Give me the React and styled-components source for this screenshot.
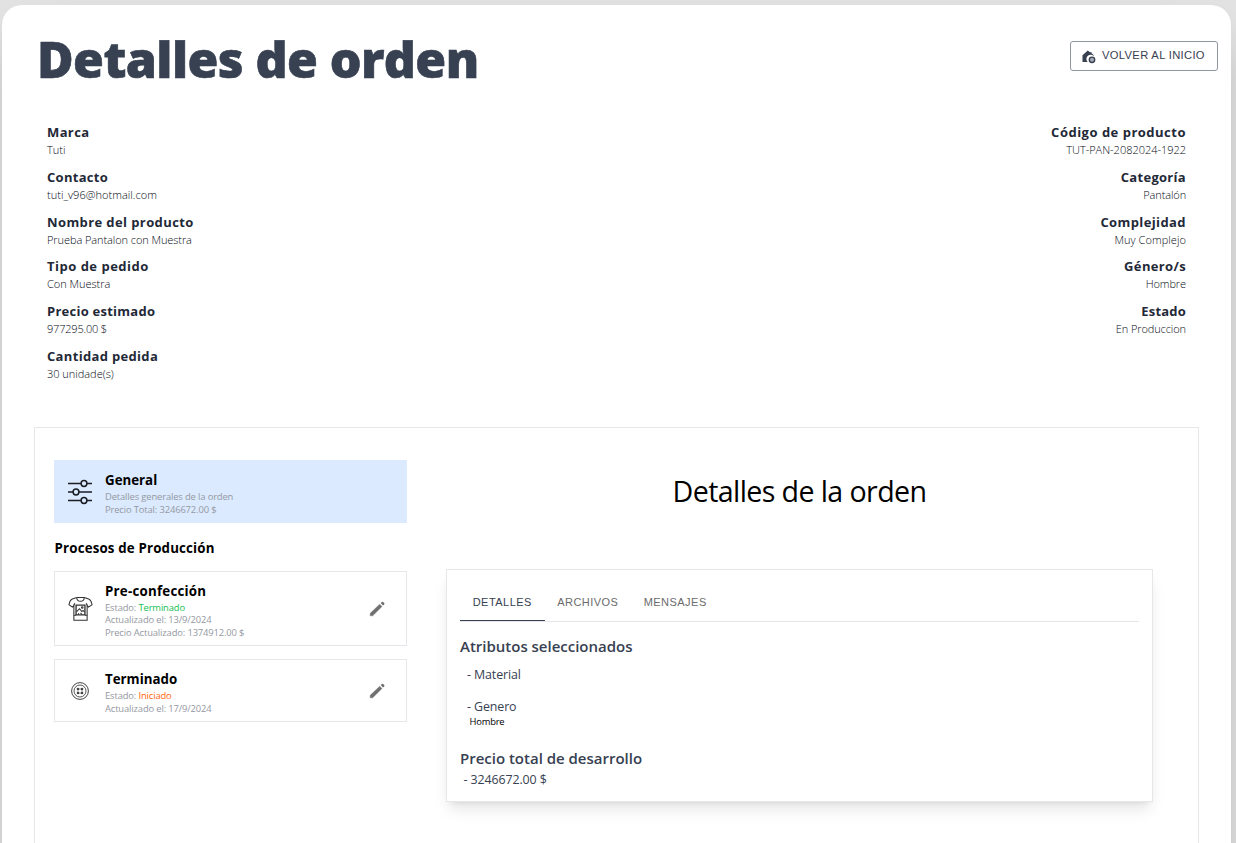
import React from "react";
import styled, { createGlobalStyle } from "styled-components";

const Global = createGlobalStyle`
  *, *::before, *::after { box-sizing: border-box; }
  html, body { margin: 0; height: 843px; overflow: hidden; background: #e3e3e3; }
  body { font-family: "Open Sans", "Noto Sans", sans-serif; color: #000; }
  h1, h2, h3, p { margin: 0; }
`;

const Page = styled.div`
  height: 843px;
  padding: 5px 5px 0 2px;
  overflow: hidden;
`;
const Sheet = styled.main`
  height: 1100px;
  background: #fff;
  border-radius: 20px;
  box-shadow: 0 25px 50px -12px rgba(0, 0, 0, 0.25);
`;
const Header = styled.header`
  display: flex;
  justify-content: space-between;
  align-items: flex-start;
  height: 117px;
  padding: 18px 13px 0 35px;
`;
const Title = styled.h1`
  font-size: 50px;
  line-height: 72px;
  font-weight: 800;
  letter-spacing: -0.6px;
  color: #374151;
  -webkit-text-stroke: 0.6px #374151;
  white-space: nowrap;
`;
const HomeButton = styled.button`
  display: flex;
  align-items: center;
  gap: 5px;
  width: 148px;
  height: 30px;
  margin-top: 18px;
  padding: 0 0 0 11px;
  border: 1px solid #9095a0;
  border-radius: 3px;
  background: #fff;
  color: #374151;
  font: 400 11.2px/28px "Liberation Sans", Arial, sans-serif;
  letter-spacing: 0.33px;
  white-space: nowrap;
  svg { margin-top: 1px; }
  span { margin-top: -2px; }
`;
const Summary = styled.section`
  display: flex;
  justify-content: space-between;
  height: 305px;
  padding: 0 45px;
`;
const FieldList = styled.div`
  display: flex;
  flex-direction: column;
  gap: 6.8px;
  text-align: ${(p) => (p.$end ? "right" : "left")};
`;
const Field = styled.div`
  height: 38px;
  white-space: nowrap;
`;
const FieldLabel = styled.h3`
  font-size: 13px;
  line-height: 20px;
  font-weight: 700;
  letter-spacing: ${(p) => p.$ls ?? 0.38}px;
  color: #1f2937;
`;
const FieldValue = styled.p`
  font-size: 11px;
  line-height: 16.4px;
  font-weight: 300;
  letter-spacing: ${(p) => p.$ls ?? -0.02}px;
  color: #050a14;
`;
const Workspace = styled.section`
  display: flex;
  gap: 39px;
  height: 700px;
  margin: 0 32px;
  padding: 32px 45px 0 19px;
  border: 1px solid #e5e7eb;
`;
const Sidebar = styled.aside`
  display: flex;
  flex-direction: column;
  width: 353px;
  flex: none;
`;
const Step = styled.div`
  display: flex;
  align-items: center;
  height: ${(p) => p.$h}px;
  margin-bottom: 13px;
  padding: 0 17px 0 ${(p) => (p.$active ? 13 : 12)}px;
  background: ${(p) => (p.$active ? "#dbeafe" : "#fff")};
  border: ${(p) => (p.$active ? "0" : "1px solid #e5e7eb")};
`;
const StepIcon = styled.div`
  display: flex;
  justify-content: center;
  width: 26px;
  margin-right: 12px;
`;
const StepText = styled.div`
  flex: 1;
  padding-top: ${(p) => p.$top ?? 4}px;
  white-space: nowrap;
`;
const StepName = styled.h3`
  font-size: 13.3px;
  line-height: 21px;
  font-weight: 700;
  letter-spacing: ${(p) => p.$ls ?? 0}px;
`;
const StepMeta = styled.p`
  font-size: 9.4px;
  line-height: 12.6px;
  letter-spacing: ${(p) => p.$ls ?? -0.13}px;
  color: #9599a3;
`;
const Status = styled.span`
  color: ${(p) => (p.$done ? "#14bf55" : "#ff6508")};
`;
const GroupTitle = styled.h3`
  height: 35px;
  margin-left: 0.5px;
  font-size: 13.3px;
  line-height: 24px;
  font-weight: 700;
  letter-spacing: 0.17px;
`;
const Content = styled.div`
  flex: 1;
`;
const ContentTitle = styled.h2`
  height: 109px;
  font-size: 28.6px;
  line-height: 61px;
  font-weight: 400;
  letter-spacing: -0.6px;
  text-align: center;
`;
const Panel = styled.div`
  height: 233px;
  padding: 15px 13px;
  border: 1px solid #e5e7eb;
  box-shadow: 0 10px 15px -3px rgba(0, 0, 0, 0.1), 0 4px 6px -4px rgba(0, 0, 0, 0.1);
`;
const Tabs = styled.nav`
  display: flex;
  height: 37px;
  margin-bottom: 12px;
  border-bottom: 1px solid #e5e7eb;
`;
const Tab = styled.div`
  height: 36px;
  padding: 0 12.7px;
  border-bottom: 1px solid ${(p) => (p.$active ? "#374151" : "transparent")};
  color: ${(p) => (p.$active ? "#374151" : "#6b6b6b")};
  font: 400 11px/34px "Liberation Sans", Arial, sans-serif;
  letter-spacing: 0.46px;
  white-space: nowrap;
`;
const SectionTitle = styled.h3`
  height: ${(p) => p.$h}px;
  font-size: 15px;
  line-height: 24px;
  font-weight: 600;
  letter-spacing: ${(p) => p.$ls ?? -0.01}px;
  color: #374151;
`;
const Attribute = styled.p`
  height: ${(p) => p.$h}px;
  padding-left: ${(p) => p.$indent ?? 7}px;
  font-size: 12.4px;
  line-height: 20px;
  letter-spacing: -0.1px;
  color: #374151;
`;
const AttributeValue = styled.p`
  height: 30px;
  padding-left: 9.5px;
  font-size: 9.4px;
  line-height: 12px;
  letter-spacing: -0.2px;
`;

const HomeIcon = () => (
  <svg width="15" height="14" viewBox="0 0 15 14">
    <path d="M.5 12V5.2L5.8.6l2.2 1.6h1.6v1l2 1.7v1.2A4.2 4.2 0 0 0 5.6 12z" fill="#374151" />
    <circle cx="10" cy="9.8" r="2.7" fill="#a5abb4" stroke="#374151" strokeWidth="1.4" />
  </svg>
);
const SlidersIcon = () => (
  <svg width="26" height="26" viewBox="0 0 26 26" fill="none" stroke="#1a1d22" strokeWidth="1.5">
    <path d="M1 4.5h13M20 4.5h5M1 13h5M12 13h13M1 21.5h13M20 21.5h5" />
    <circle cx="17" cy="4.5" r="2.9" />
    <circle cx="9" cy="13" r="2.9" />
    <circle cx="17" cy="21.5" r="2.9" />
  </svg>
);
const ShirtIcon = () => (
  <svg width="25" height="25" viewBox="0 0 26 26" fill="none" stroke="#333" strokeWidth="1.1">
    <path d="M9 1.5 4.5 3.2Q2 4.2 1 9.2l3.7 2.3 1.4-1.7v15.4h13.8V9.8l1.4 1.7L25 9.2q-1-5-3.5-6L17 1.5" />
    <path d="M9 1.5h8q-.4 4-4 4t-4-4M6 9.5l1.2-2M20 9.5l-1.2-2M6 20h2.5M17.5 20H20" />
    <path d="M8.4 9.5h9.2v10.2H8.4z" strokeWidth="1.4" />
    <path d="M9 16.2l3-3 2.4 3 1.2-1.2 1.8 1.8M13 17.5l2 2M11 18v1.5" />
    <circle cx="14.8" cy="12" r=".8" />
  </svg>
);
const ButtonIcon = () => (
  <svg width="18" height="18" viewBox="0 0 18 18" fill="none" stroke="#444" strokeWidth="1">
    <circle cx="9" cy="9" r="8.4" />
    <circle cx="9" cy="9" r="6" strokeWidth=".9" />
    <g fill="#444" stroke="none">
      <circle cx="7" cy="7" r="1.3" />
      <circle cx="11" cy="7" r="1.3" />
      <circle cx="7" cy="11" r="1.3" />
      <circle cx="11" cy="11" r="1.3" />
    </g>
    <path d="M7 7h4v4H7z" strokeWidth=".5" />
  </svg>
);
const PencilIcon = () => (
  <svg width="24" height="24" viewBox="0 0 24 24" fill="#6f6f6f">
    <path d="M5.2 16.3 14.7 7.2l2.3 2.4L7.7 18.8H5.2z" stroke="#6f6f6f" strokeWidth=".4" />
    <path d="m15.7 6.1 1.2-1.2q.6-.4 1.2.1l1.1 1.1q.5.6 0 1.2l-1.2 1.2z" />
  </svg>
);

const leftFields = [
  ["Marca", "Tuti"],
  ["Contacto", "tuti_v96@hotmail.com", 0.3, 0.03],
  ["Nombre del producto", "Prueba Pantalon con Muestra", 0.4, -0.08],
  ["Tipo de pedido", "Con Muestra", 0.5],
  ["Precio estimado", "977295.00 $", 0.25, -0.2],
  ["Cantidad pedida", "30 unidade(s)", 0.33],
];
const rightFields = [
  ["Código de producto", "TUT-PAN-2082024-1922", 0.5],
  ["Categoría", "Pantalón", 0.3, -0.12],
  ["Complejidad", "Muy Complejo", 0.4, 0.06],
  ["Género/s", "Hombre", 0.35, -0.1],
  ["Estado", "En Produccion", 0.2, -0.1],
];

const Fields = ({ items, end }) => (
  <FieldList $end={end}>
    {items.map(([label, value, labelSpacing, valueSpacing]) => (
      <Field key={label}>
        <FieldLabel $ls={labelSpacing}>{label}</FieldLabel>
        <FieldValue $ls={valueSpacing}>{value}</FieldValue>
      </Field>
    ))}
  </FieldList>
);

export default function App() {
  return (
    <Page>
      <Global />
      <Sheet>
        <Header>
          <Title>Detalles de orden</Title>
          <HomeButton><HomeIcon /><span>VOLVER AL INICIO</span></HomeButton>
        </Header>
        <Summary>
          <Fields items={leftFields} />
          <Fields items={rightFields} end />
        </Summary>
        <Workspace>
          <Sidebar>
            <Step $active $h={63}>
              <StepIcon><SlidersIcon /></StepIcon>
              <StepText>
                <StepName>General</StepName>
                <StepMeta>Detalles generales de la orden</StepMeta>
                <StepMeta>Precio Total: 3246672.00 $</StepMeta>
              </StepText>
            </Step>
            <GroupTitle>Procesos de Producción</GroupTitle>
            <Step $h={75}>
              <StepIcon><ShirtIcon /></StepIcon>
              <StepText $top={3}>
                <StepName $ls={0.23}>Pre-confección</StepName>
                <StepMeta>Estado: <Status $done>Terminado</Status></StepMeta>
                <StepMeta>Actualizado el: 13/9/2024</StepMeta>
                <StepMeta>Precio Actualizado: 1374912.00 $</StepMeta>
              </StepText>
              <PencilIcon />
            </Step>
            <Step $h={63}>
              <StepIcon><ButtonIcon /></StepIcon>
              <StepText>
                <StepName>Terminado</StepName>
                <StepMeta>Estado: <Status>Iniciado</Status></StepMeta>
                <StepMeta>Actualizado el: 17/9/2024</StepMeta>
              </StepText>
              <PencilIcon />
            </Step>
          </Sidebar>
          <Content>
            <ContentTitle>Detalles de la orden</ContentTitle>
            <Panel>
              <Tabs>
                <Tab $active>DETALLES</Tab>
                <Tab>ARCHIVOS</Tab>
                <Tab>MENSAJES</Tab>
              </Tabs>
              <SectionTitle $h={31}>Atributos seleccionados</SectionTitle>
              <Attribute $h={32}>- Material</Attribute>
              <Attribute $h={19}>- Genero</Attribute>
              <AttributeValue>Hombre</AttributeValue>
              <SectionTitle $h={24}>Precio total de desarrollo</SectionTitle>
              <Attribute $h={20} $indent={3.5}>- 3246672.00 $</Attribute>
            </Panel>
          </Content>
        </Workspace>
      </Sheet>
    </Page>
  );
}
